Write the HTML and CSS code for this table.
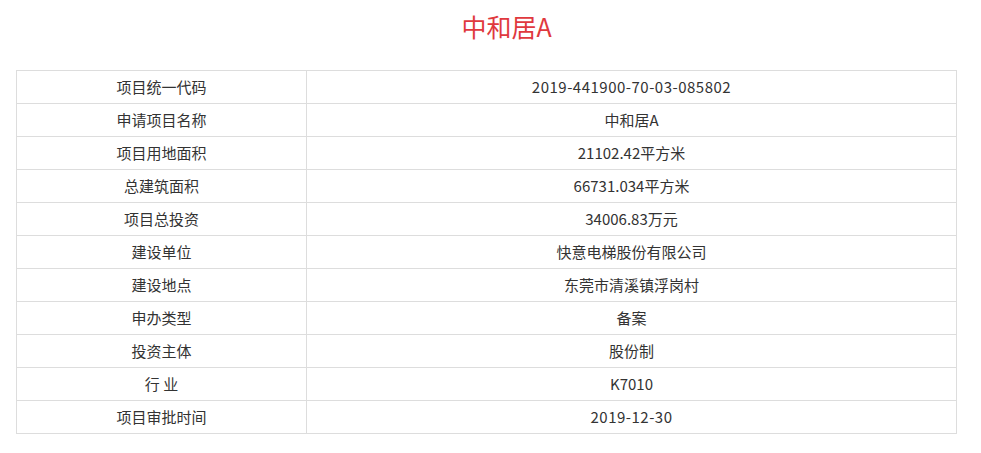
FILE: index.html
```html
<!DOCTYPE html>
<html lang="zh-CN">
<head>
<meta charset="utf-8">
<title>中和居A</title>
<link rel="stylesheet" href="styles.css">
</head>
<body>
<div class="page">
  <h1 class="title">中和居A</h1>
  <table class="info">
    <tr><td class="label">项目统一代码</td><td class="value"><span class="code">2019-441900-70-03-085802</span></td></tr>
    <tr><td class="label">申请项目名称</td><td class="value">中和居A</td></tr>
    <tr><td class="label">项目用地面积</td><td class="value">21102.42平方米</td></tr>
    <tr><td class="label">总建筑面积</td><td class="value">66731.034平方米</td></tr>
    <tr><td class="label">项目总投资</td><td class="value">34006.83万元</td></tr>
    <tr><td class="label">建设单位</td><td class="value">快意电梯股份有限公司</td></tr>
    <tr><td class="label">建设地点</td><td class="value">东莞市清溪镇浮岗村</td></tr>
    <tr><td class="label">申办类型</td><td class="value">备案</td></tr>
    <tr><td class="label">投资主体</td><td class="value">股份制</td></tr>
    <tr><td class="label">行 业</td><td class="value">K7010</td></tr>
    <tr><td class="label">项目审批时间</td><td class="value"><span class="code">2019-12-30</span></td></tr>
  </table>
</div>
</body>
</html>
```
FILE: styles.css
```css
html, body {
  margin: 0;
  padding: 0;
  background: #fff;
}
body {
  font-family: "Noto Sans CJK SC", "Noto Sans", sans-serif;
  color: #333;
}
.page {
  padding: 0 24px 0 16px;
}
.title {
  margin: 0;
  padding: 9px 0 0 40px;
  height: 60px;
  box-sizing: border-box;
  text-align: center;
  font-size: 25px;
  font-weight: normal;
  line-height: 34px;
  color: #e0393e;
}
.info {
  margin-top: 10px;
  width: 941px;
  border-collapse: collapse;
  font-size: 15px;
}
.info td {
  border: 1px solid #ddd;
  height: 32px;
  padding: 0;
  text-align: center;
  vertical-align: middle;
  line-height: 20px;
}
.info .label {
  width: 289px;
}
.code {
  letter-spacing: 0.5px;
}
```
